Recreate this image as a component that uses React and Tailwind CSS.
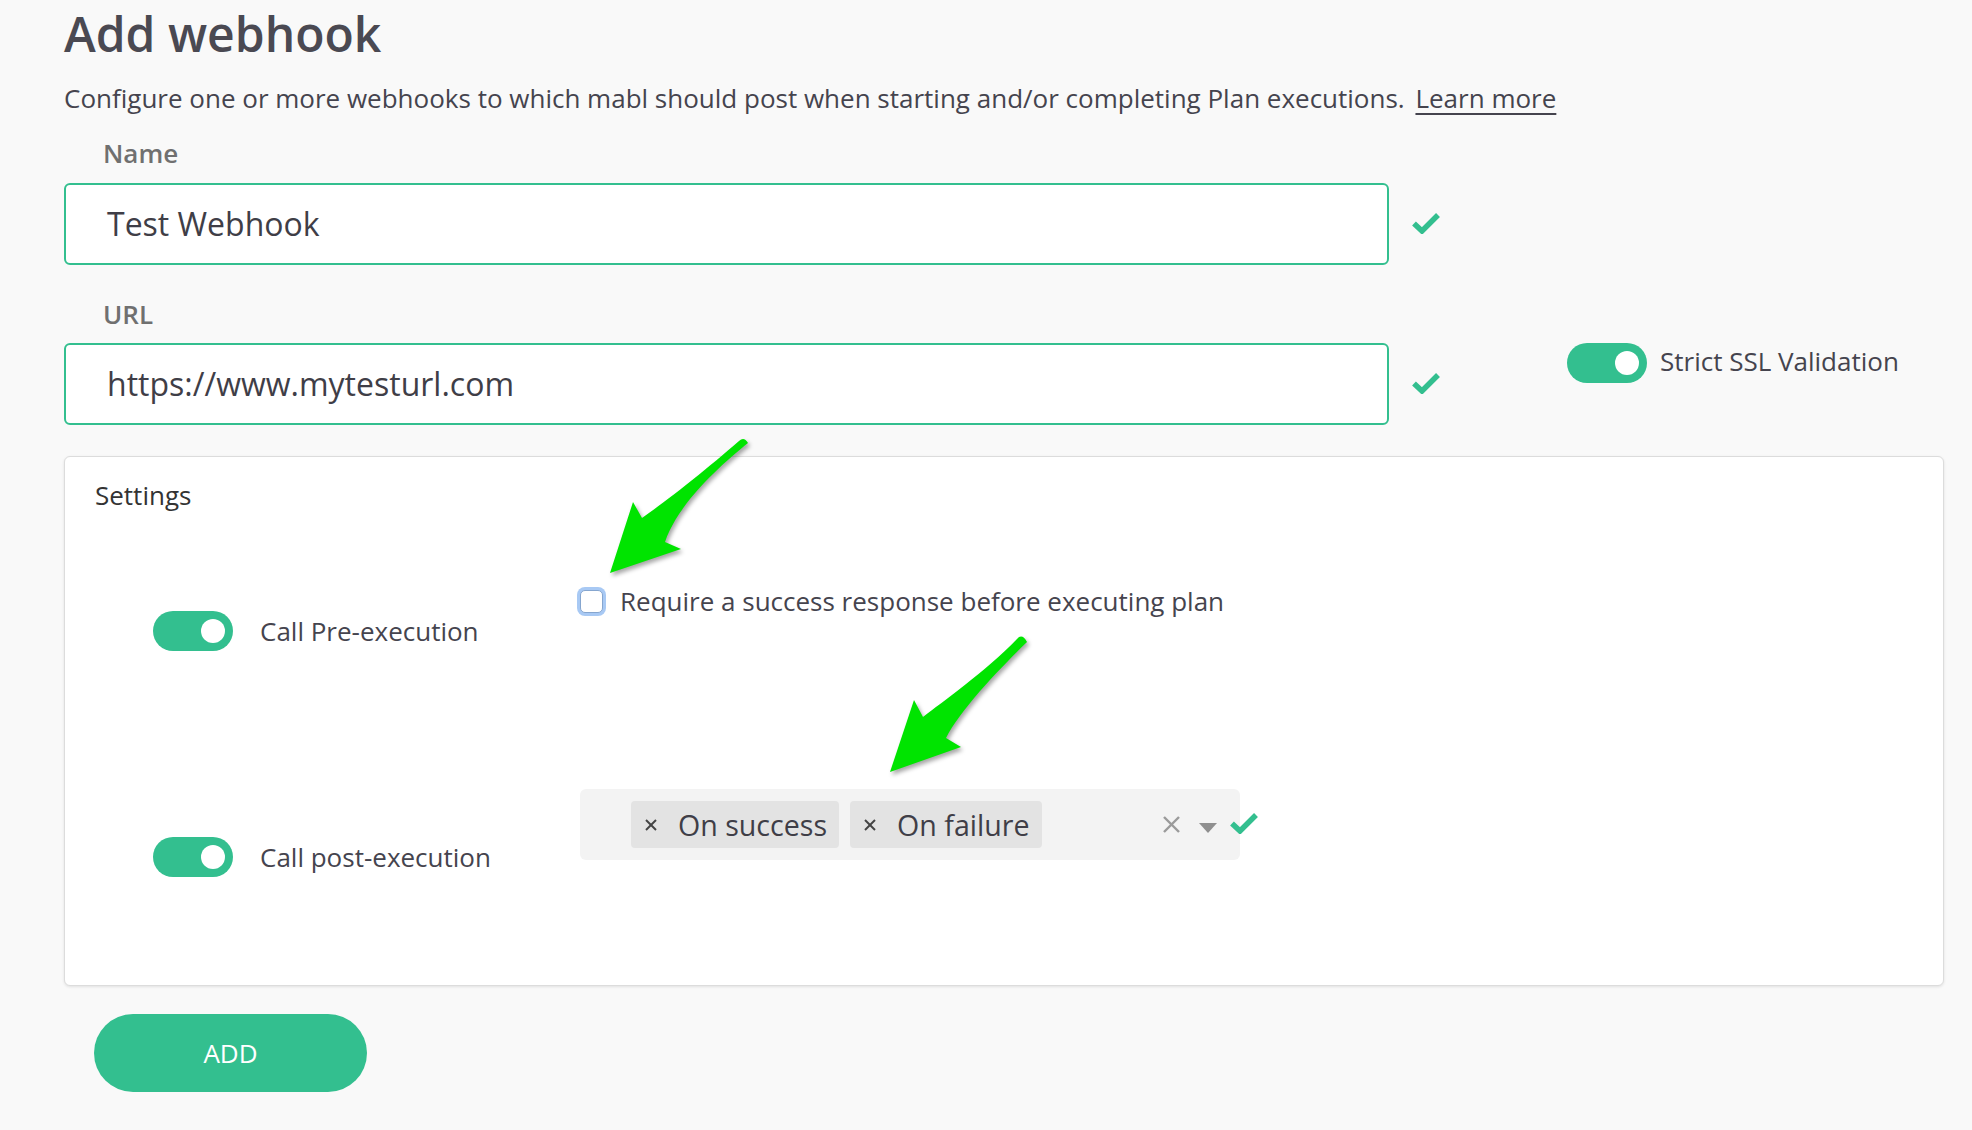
import React from "react";

const GREEN = "bg-[#33bf8f]";

function Toggle() {
  return (
    <div className={`w-[80px] h-[40px] rounded-full ${GREEN} flex items-center justify-end pr-[8px] shrink-0`}>
      <div className="w-[24px] h-[24px] rounded-full bg-white" />
    </div>
  );
}

function Check({ className = "" }) {
  return (
    <svg width="28" height="22" viewBox="0 0 28 22" className={className}>
      <polyline points="2,11.5 10,19 26,3" fill="none" stroke="#33bf8f" strokeWidth="5.5" strokeLinejoin="miter" strokeLinecap="butt" />
    </svg>
  );
}

function SmallX({ size = 12, stroke = "#444", width = 2 }) {
  return (
    <svg width={size} height={size} viewBox={`0 0 ${size} ${size}`} className="shrink-0">
      <line x1="1" y1="1" x2={size - 1} y2={size - 1} stroke={stroke} strokeWidth={width} />
      <line x1={size - 1} y1="1" x2="1" y2={size - 1} stroke={stroke} strokeWidth={width} />
    </svg>
  );
}

function Tag({ label }) {
  return (
    <div className="h-[47px] rounded-[4px] bg-[#e3e3e3] flex items-center pl-[14px] pr-[12px]">
      <SmallX size={12} stroke="#444" width={2} />
      <span className="ml-[21px] text-[28.6px] leading-[28px] text-[#3f3e47]">{label}</span>
    </div>
  );
}

export default function App() {
  return (
    <div className="relative min-h-screen w-[1972px] bg-[#f9f9f9] font-['Open_Sans',sans-serif] overflow-hidden">
      <div className="pl-[64px] pt-[10px] pb-[20px]">
        <h1 className="text-[48px] leading-[48px] font-semibold text-[#4a4952]">Add webhook</h1>
        <p className="mt-[27px] text-[26px] leading-[26px] text-[#45444e] whitespace-nowrap">
          Configure one or more webhooks to which mabl should post when starting and/or completing Plan executions.{" "}
          <a className="ml-[4px] underline underline-offset-[5px] decoration-[2px] text-[#45444e]">Learn more</a>
        </p>

        {/* Name field */}
        <div className="mt-[29px] ml-[39px] text-[26px] leading-[26px] font-semibold text-[#707070]">Name</div>
        <div className="mt-[17px] flex items-center">
          <div className="w-[1325px] h-[82px] rounded-[6px] border-2 border-[#33bf8f] bg-white flex items-center pl-[41px] text-[32px] leading-[32px] text-[#3f3e47]">
            Test Webhook
          </div>
          <Check className="ml-[23px] -mt-[2px]" />
        </div>

        {/* URL field */}
        <div className="mt-[36px] ml-[39px] text-[26px] leading-[26px] font-semibold text-[#707070]">URL</div>
        <div className="mt-[16px] flex items-start">
          <div className="w-[1325px] h-[82px] rounded-[6px] border-2 border-[#33bf8f] bg-white flex items-center pl-[41px] text-[32px] leading-[32px] text-[#3f3e47]">
            https://www.mytesturl.com
          </div>
          <div className="h-[82px] flex items-center ml-[23px]">
            <Check className="-mt-[2px]" />
          </div>
          <div className="ml-[127px] flex items-center">
            <Toggle />
            <span className="ml-[13px] -mt-[4px] text-[26px] leading-[26px] text-[#45444e] whitespace-nowrap">Strict SSL Validation</span>
          </div>
        </div>

        {/* Settings card */}
        <div className="mt-[31px] w-[1880px] rounded-[6px] border border-[#dcdcdc] bg-white shadow-[0_1px_3px_rgba(0,0,0,0.10)] pt-[25px] pb-[108px]">
          <div className="pl-[30px] text-[26px] leading-[26px] text-[#333333]">Settings</div>

          <div className="mt-[82px] flex items-start">
            <div className="w-[515px] pl-[88px] shrink-0">
              <div className="mt-[21px] flex items-center">
                <Toggle />
                <span className="ml-[27px] text-[26px] leading-[26px] text-[#45444e] whitespace-nowrap">Call Pre-execution</span>
              </div>
            </div>
            <div className="flex items-center h-[23px]">
              <div className="w-[23px] h-[23px] rounded-[5px] border border-[#86a6cf] bg-white shadow-[0_0_0_3px_#a8c9f4] shrink-0" />
              <span className="ml-[17px] -mt-[2px] text-[26px] leading-[26px] text-[#45444e] whitespace-nowrap">
                Require a success response before executing plan
              </span>
            </div>
          </div>

          <div className="mt-[138px] flex items-start">
            <div className="w-[515px] pl-[88px] shrink-0">
              <div className="mt-[48px] flex items-center">
                <Toggle />
                <span className="ml-[27px] text-[26px] leading-[26px] text-[#45444e] whitespace-nowrap">Call post-execution</span>
              </div>
            </div>
            <div className="flex items-center">
              <div className="w-[660px] h-[71px] rounded-[6px] bg-[#f3f3f3] flex items-center pl-[51px] pr-[23px]">
                <div className="flex items-center gap-[11px]">
                  <Tag label="On success" />
                  <Tag label="On failure" />
                </div>
                <div className="ml-auto flex items-center">
                  <SmallX size={17} stroke="#9a9a9a" width={2.4} />
                  <svg width="18" height="10" viewBox="0 0 18 10" className="ml-[19px] mt-[6px]">
                    <polygon points="0,0 18,0 9,10" fill="#8f8f8f" />
                  </svg>
                </div>
              </div>
              <Check className="-ml-[10px] -mt-[4px]" />
            </div>
          </div>
        </div>

        <button className={`mt-[28px] ml-[30px] w-[273px] h-[78px] rounded-full ${GREEN} text-white text-[26px] leading-[26px] flex items-center justify-center`}>
          ADD
        </button>
      </div>

      {/* annotation arrows */}
      <svg
        className="absolute top-0 left-0 pointer-events-none drop-shadow-[2px_3px_2px_rgba(0,0,0,0.35)]"
        width="1972"
        height="1130"
        viewBox="0 0 1972 1130"
      >
        <path
          d="M739,441 Q744,436 748,443 C722,464 678,503 665,542 L681,549 L610,573 L633,502 L642,518 C668,500 708,468 739,441 Z"
          fill="#00e400"
        />
        <path
          d="M1017,639 Q1022,633 1027,642 C1000,668 960,710 946,738 L961,747 L890,772 L914,700 L923,717 C942,702 985,672 1017,639 Z"
          fill="#00e400"
        />
      </svg>
    </div>
  );
}
